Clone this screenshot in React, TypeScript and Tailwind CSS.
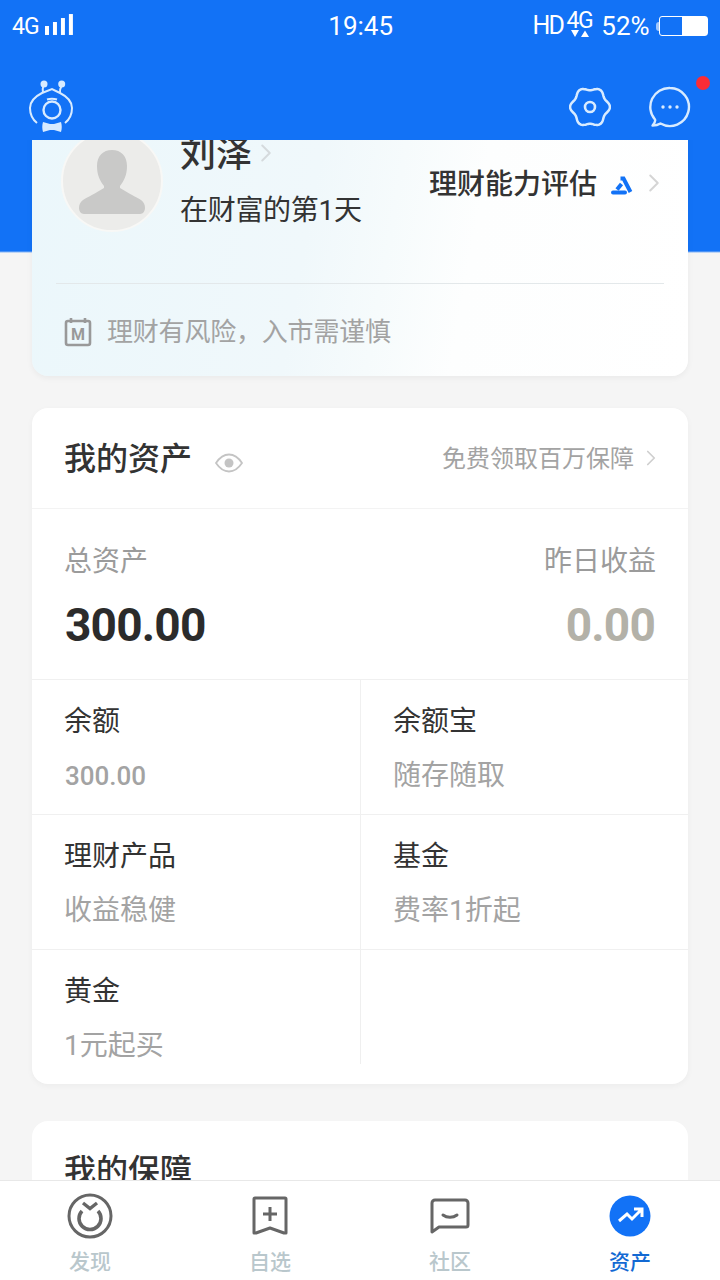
import { ChevronRight } from "lucide-react";

const CJK = "font-['Roboto','Noto_Sans_CJK_SC',sans-serif]";

// six soft lobes, same outline as the settings icon
const gearPath =
    Array.from({ length: 120 }, (_, i) => {
        const a = (i / 120) * Math.PI * 2;
        const r = 18.3 + 1.6 * Math.cos(6 * a);
        return `${i === 0 ? "M" : "L"}${(21 + r * Math.cos(a)).toFixed(2)} ${(21 + r * Math.sin(a)).toFixed(2)}`;
    }).join(" ") + "z";

function Cell({ title, sub, num, border, h }: { title?: string; sub?: string; num?: boolean; border?: boolean; h: string }) {
    return (
        <div className={`${h} pl-[32px] pt-[23px] ${border ? "border-r border-[#efefef]" : ""}`}>
            {title && <div className="text-[28px] leading-[38px] text-[#333]">{title}</div>}
            {sub && (
                <div className={`mt-[16px] leading-[38px] text-[#a3a3a3] ${num ? "text-[26px] font-medium ml-[1px]" : "text-[28px]"}`}>
                    {sub}
                </div>
            )}
        </div>
    );
}

function NavItem({ label, active, children }: { label: string; active?: boolean; children: React.ReactNode }) {
    return (
        <div className="flex flex-col items-center w-[180px]">
            <div className="h-[56px] w-[56px] flex items-center justify-center">{children}</div>
            <div className={`mt-[4px] text-[21px] leading-[28px] font-medium ${active ? "text-[#1269d3]" : "text-[#b9c7cc]"}`}>
                {label}
            </div>
        </div>
    );
}

export default function App() {
    return (
        <div className={`${CJK} w-[720px] h-[1280px] flex flex-col overflow-hidden bg-[#f5f5f5]`}>
            {/* status bar + title */}
            <div className="h-[140px] shrink-0 bg-[#1272f6] text-white relative z-10">
                <div className="flex items-center h-[52px] pl-[12px] pr-[12px]">
                    <span className="text-[23px] tracking-[-1px] w-[32px] mt-[2px]">4G</span>
                    <svg width="30" height="24" viewBox="0 0 30 24" fill="white" className="mb-[2px]">
                        <rect x="1" y="13" width="4" height="9" />
                        <rect x="9" y="9" width="4" height="13" />
                        <rect x="17" y="5" width="4" height="17" />
                        <rect x="25" y="1" width="4" height="21" />
                    </svg>
                    <span className="ml-[254px] text-[26px] w-[66px] text-center">19:45</span>
                    <span className="ml-[139px] text-[25px] tracking-[-2px] w-[34px]">HD</span>
                    <div className="relative w-[26px] h-[36px]">
                        <span className="absolute left-0 top-[-2px] text-[23px] tracking-[-1.500px] leading-[30px]">4G</span>
                        <svg width="20" height="8" viewBox="0 0 20 8" fill="white" className="absolute left-[4px] top-[22px]">
                            <path d="M1 0h8L5 7zM11 7h8l-4-6.500z" />
                        </svg>
                    </div>
                    <span className="ml-[9px] text-[26px] w-[55px]">52%</span>
                    <div className="w-[3px] h-[9px] rounded-l-full bg-white/60" />
                    <div className="w-[49px] h-[20px] border border-white rounded-[3px] flex justify-end">
                        <div className="w-[25px] bg-white" />
                    </div>
                </div>
                <div className="flex items-start">
                    <svg width="64" height="64" viewBox="0 0 64 64" fill="none" stroke="#d8ebff" strokeWidth="2" className="ml-[20px] mt-[18px]">
                        <circle cx="24" cy="14" r="3.500" fill="#d8ebff" stroke="none" />
                        <circle cx="41.700" cy="14" r="3.500" fill="#d8ebff" stroke="none" />
                        <path d="M23.500 15c-1 3-1 5-.5 8M42 15c-1 2-2.500 4-2 8" />
                        <path d="M17 53C12 49 10 44 10 38c0-8 6-12 12-15l10-4 8 4c6 3 12 7 12 15 0 6-2 11-7 15" />
                        <circle cx="32" cy="40" r="8.500" strokeWidth="2.400" />
                        <path d="M27 29.500c3-1 7-1 10 0" />
                        <path d="M23 52l7 2h4l7-2c1 3 1 7 0 10l-7-2h-4l-7 2c-1-3-1-7 0-10z" fill="#d8ebff" stroke="none" />
                    </svg>
                    <svg width="42" height="42" viewBox="0 0 42 42" fill="none" stroke="#d8ebff" strokeWidth="2.500" className="ml-[485px] mt-[34px]">
                        <path d={gearPath} strokeLinejoin="round" />
                        <circle cx="21" cy="21" r="5" strokeWidth="2.600" />
                    </svg>
                    <div className="relative ml-[38px] mt-[34px]">
                        <svg width="42" height="42" viewBox="0 0 42 42" fill="none" stroke="#d8ebff" strokeWidth="2.400">
                            <path d="M21 2a19 19 0 1 1-9.500 35.500C9 39 6 39.500 3.500 39.500c2-2 3-4.500 2.500-6A19 19 0 0 1 21 2z" strokeLinejoin="round" />
                            <circle cx="14" cy="21" r="1.700" fill="#d8ebff" stroke="none" />
                            <circle cx="21" cy="21" r="1.700" fill="#d8ebff" stroke="none" />
                            <circle cx="28" cy="21" r="1.700" fill="#d8ebff" stroke="none" />
                        </svg>
                        <div className="absolute right-[-19px] top-[-10px] w-[14px] h-[14px] rounded-full bg-[#fb2c36]" />
                    </div>
                </div>
            </div>

            {/* scrolled content */}
            <div className="flex-1 min-h-0 overflow-hidden bg-[linear-gradient(#1272f6_111px,#f5f5f5_113px)] px-[32px]">
                {/* profile card, top is scrolled under the header */}
                <div className="-mt-[20px] h-[256px] rounded-[16px] bg-[linear-gradient(100deg,#ebf7fb_0%,#f0f8fb_42%,#f6fbfc_54%,#fdfefe_66%,#fff_100%)] shadow-[0_2px_6px_rgba(0,0,0,0.05)] px-[24px]">
                    <div className="h-[164px] border-b border-[#e3e8ea] flex">
                        <div className="ml-[5px] mt-[10px] w-[102px] h-[102px] rounded-full bg-[#ececea] border-2 border-[#f8f8f6] flex items-center justify-center shrink-0">
                            <svg width="66" height="65" viewBox="0 0 66 65" fill="#c9c9c8">
                                <path d="M33 1c9 0 15 6 15 16 0 9-3 15-7 20v2c8 5 16 9 21 12 3 2 4 5 4 8 0 3-2 6-5 6H5c-3 0-5-3-5-6 0-3 1-6 4-8 5-3 13-7 21-12v-2c-4-5-7-11-7-20C18 7 24 1 33 1z" />
                            </svg>
                        </div>
                        <div className="ml-[17px] mt-[13px] w-[249px] shrink-0">
                            <div className="flex items-center h-[44px]">
                                <span className="text-[36px] leading-[44px] font-medium text-[#333]">刘泽</span>
                                <ChevronRight size={30} strokeWidth={1.6} className="text-[#d5dadd] -ml-[1px] -mt-[4px]" />
                            </div>
                            <div className="mt-[14px] text-[28px] tracking-[-0.300px] leading-[40px] text-[#333]">在财富的第1天</div>
                        </div>
                        <div className="mt-[43px] h-[44px] flex items-center shrink-0">
                            <span className="text-[28px] font-medium text-[#333] whitespace-nowrap">理财能力评估</span>
                            <svg width="22" height="19" viewBox="0 0 22 19" fill="none" stroke="#1272f6" strokeWidth="4" className="ml-[14px]">
                                <path d="M9.500 2.500h3L19.500 16" />
                                <path d="M10.500 8L6 13.500" />
                                <path d="M2 16.500h12" strokeLinecap="round" />
                            </svg>
                            <ChevronRight size={30} strokeWidth={1.6} className="text-[#d5d5d5] ml-[6px] -mt-[4px]" />
                        </div>
                    </div>
                    <div className="flex items-center mt-[30px] ml-[8px]">
                        <svg width="28" height="30" viewBox="0 0 28 30" fill="none" stroke="#999" strokeWidth="2.600">
                            <rect x="2" y="4" width="24" height="24" rx="2" />
                            <path d="M7 1v5M21 1v5" />
                            <text x="14" y="22.500" textAnchor="middle" fontSize="16" fontWeight="700" fill="#999" stroke="none">M</text>
                        </svg>
                        <span className="ml-[15px] text-[26px] tracking-[-0.200px] leading-[36px] text-[#a3a3a3]">理财有风险，入市需谨慎</span>
                    </div>
                </div>

                {/* assets */}
                <div className="mt-[32px] h-[676px] rounded-[16px] bg-white shadow-[0_2px_6px_rgba(0,0,0,0.04)]">
                    <div className="h-[101px] border-b border-[#f3f3f3] pl-[32px] pr-[32px] flex items-center">
                        <span className="text-[32px] font-medium text-[#333] mt-[2px]">我的资产</span>
                        <svg width="28" height="20" viewBox="0 0 28 20" fill="none" stroke="#c4c4c4" strokeWidth="1.800" className="ml-[23px] mt-[10px]">
                            <path d="M1 10C5 4 9 1.500 14 1.500S23 4 27 10c-4 6-8 8.500-13 8.500S5 16 1 10z" />
                            <circle cx="14" cy="10" r="4.500" fill="#c4c4c4" stroke="none" />
                        </svg>
                        <span className="ml-auto mt-[2px] text-[24px] text-[#a3a3a3]">免费领取百万保障</span>
                        <ChevronRight size={26} strokeWidth={1.6} className="text-[#cfcfcf] ml-[4px] -mr-[8px]" />
                    </div>
                    <div className="h-[171px] border-b border-[#f0f0f0] px-[32px] pt-[32px] flex justify-between">
                        <div>
                            <div className="text-[28px] leading-[42px] text-[#9b9b9b]">总资产</div>
                            <div className="mt-[16px] ml-[1px] text-[46px] tracking-[-0.800px] leading-[52px] font-bold text-[#2b2b2b]">300.00</div>
                        </div>
                        <div className="flex flex-col items-end">
                            <div className="text-[28px] leading-[42px] text-[#9b9b9b]">昨日收益</div>
                            <div className="mt-[16px] mr-[1px] text-[46px] tracking-[-0.800px] leading-[52px] font-bold text-[#b3b1a8]">0.00</div>
                        </div>
                    </div>
                    <div className="grid grid-cols-[329px_1fr]">
                        <Cell h="h-[135px] border-b border-[#f0f0f0]" border title="余额" sub="300.00" num />
                        <Cell h="h-[135px] border-b border-[#f0f0f0]" title="余额宝" sub="随存随取" />
                        <Cell h="h-[135px] border-b border-[#f0f0f0]" border title="理财产品" sub="收益稳健" />
                        <Cell h="h-[135px] border-b border-[#f0f0f0]" title="基金" sub="费率1折起" />
                        <Cell h="h-[114px]" border title="黄金" sub="1元起买" />
                        <Cell h="h-[114px]" />
                    </div>
                </div>

                {/* insurance, cut by the tab bar */}
                <div className="mt-[37px] h-[200px] rounded-[16px] bg-white pl-[32px] pt-[28px]">
                    <div className="text-[32px] leading-[44px] font-medium text-[#333]">我的保障</div>
                </div>
            </div>

            {/* tab bar */}
            <div className="h-[100px] shrink-0 bg-white border-t border-[#e8e8e8] flex pt-[7px] relative z-10">
                <NavItem label="发现">
                    <svg width="46" height="46" viewBox="0 0 46 46" fill="none" stroke="#666" strokeWidth="3">
                        <circle cx="23" cy="23" r="21" />
                        <path d="M15 18a11 11 0 1 0 16 0" strokeWidth="3.600" />
                        <path d="M16 10l7 5.500L30 10" strokeWidth="3.400" />
                    </svg>
                </NavItem>
                <NavItem label="自选">
                    <svg width="36" height="40" viewBox="0 0 36 40" fill="none" stroke="#666" strokeWidth="3" strokeLinejoin="round">
                        <path d="M3 2h30a1 1 0 0 1 1 1v34l-2 0-14-5-14 5-2 0V3a1 1 0 0 1 1-1z" />
                        <path d="M18 11v14M11 18h14" />
                    </svg>
                </NavItem>
                <NavItem label="社区">
                    <svg width="40" height="36" viewBox="0 0 40 36" fill="none" stroke="#666" strokeWidth="3" strokeLinejoin="round">
                        <path d="M5 2h30a3 3 0 0 1 3 3v22a2 2 0 0 1-2 2H9l-7 5V5a3 3 0 0 1 3-3z" />
                        <path d="M13 17c4 3 10 3 14 0" strokeLinecap="round" />
                    </svg>
                </NavItem>
                <NavItem label="资产" active>
                    <svg width="42" height="42" viewBox="0 0 42 42">
                        <circle cx="21" cy="21" r="20.500" fill="#1272f6" />
                        <path d="M10 26l8-7 5 5 9-9M25 14h8v8" fill="none" stroke="white" strokeWidth="3" />
                    </svg>
                </NavItem>
            </div>
        </div>
    );
}
